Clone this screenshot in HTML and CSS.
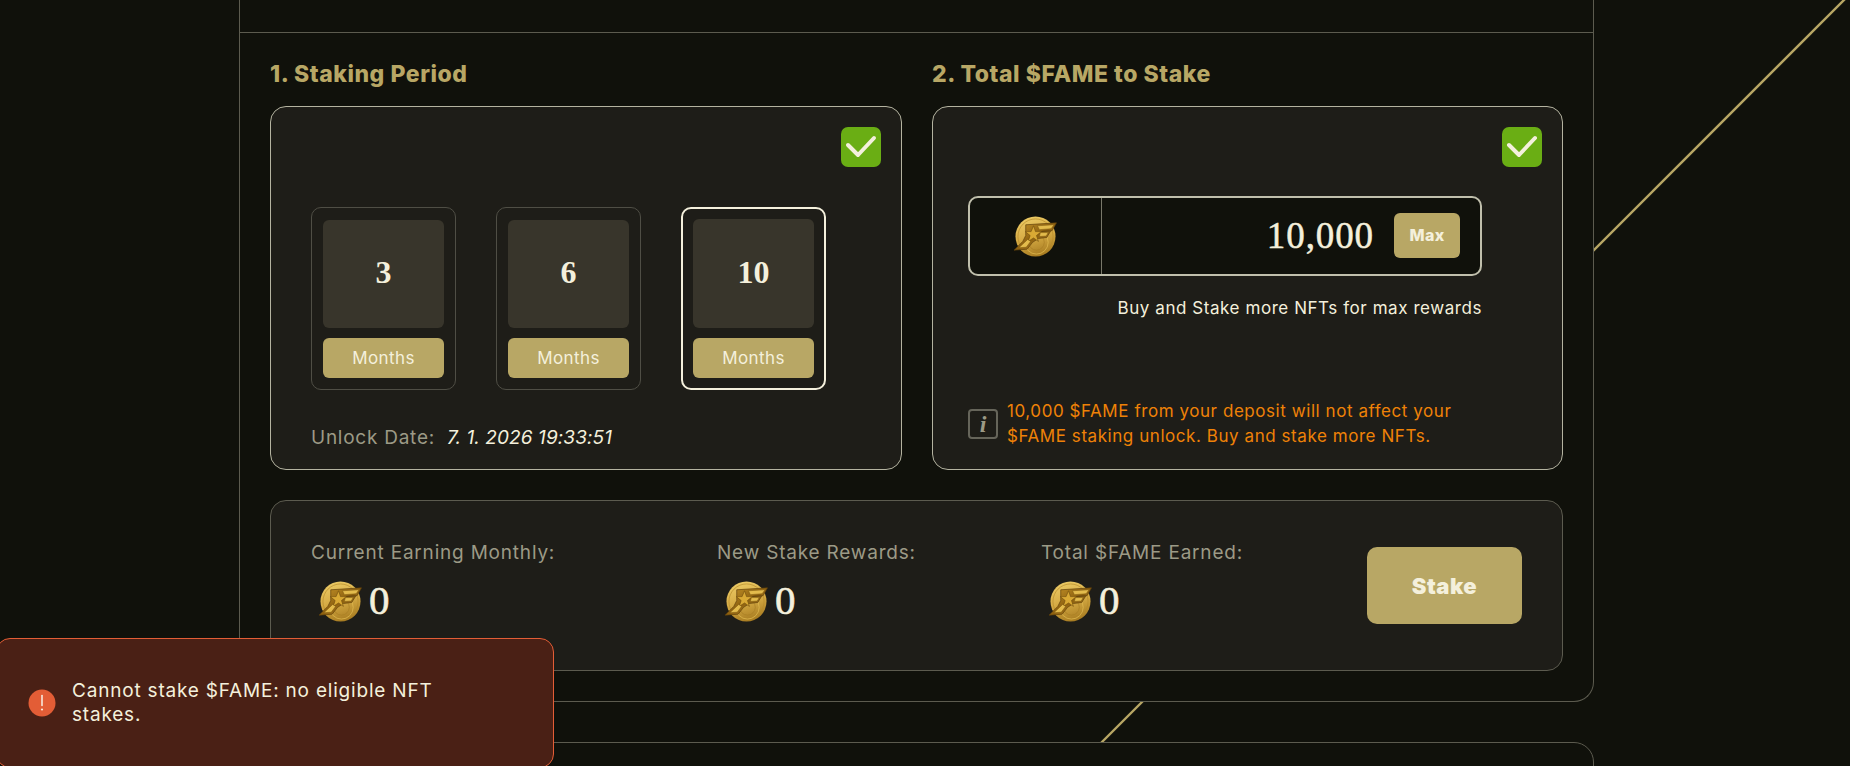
FILE: index.html
```html
<!DOCTYPE html>
<html lang="en">
<head>
<meta charset="utf-8">
<title>Stake $FAME</title>
<link rel="stylesheet" href="styles.css">
</head>
<body>
<svg width="0" height="0" class="defs">
  <defs>
    <linearGradient id="coinFill" x1="0.3" y1="0" x2="0.6" y2="1">
      <stop offset="0" stop-color="#eccb66"/>
      <stop offset="0.5" stop-color="#d6ab44"/>
      <stop offset="1" stop-color="#a67a20"/>
    </linearGradient>
    <linearGradient id="markFill" x1="0" y1="0" x2="1" y2="1">
      <stop offset="0" stop-color="#c9982c"/>
      <stop offset="0.5" stop-color="#8f6210"/>
      <stop offset="1" stop-color="#b9872a"/>
    </linearGradient>
    <symbol id="coin" viewBox="0 0 44 42">
      <circle cx="22" cy="21" r="20.5" fill="url(#coinFill)"/>
      <circle cx="22" cy="21" r="18" fill="none" stroke="#b58a2a" stroke-width=".7"/>
      <circle cx="23" cy="27" r="12" fill="none" stroke="#e3bd52" stroke-width=".7"/>
      <circle cx="23" cy="27" r="8" fill="none" stroke="#a87e24" stroke-width=".7"/>
      <path d="M12 9 43.500 7 39 15 30 15.500 28 16 37.500 15.500 33.500 22 25 23 19 27 13.500 34 0 35 9 26 12 20z" fill="url(#markFill)" stroke="#5f400a" stroke-width=".7" stroke-linejoin="round"/>
      <path d="M20 10 22 16 28 16 23 20 25 26 20 22.500 14.500 26 16.500 20 11.500 16 17.500 16z" fill="#d9a934" stroke="#6d4a0c" stroke-width=".6" stroke-linejoin="round"/>
      <path d="M24 10 41 9 38 13 26 14z" fill="#e3bb4c" stroke="#7a540f" stroke-width=".5"/>
      <path d="M27 17 35 17 33 20.500 26 21z" fill="#e3bb4c" stroke="#7a540f" stroke-width=".5"/>
      <path d="M14 24 5 32.500 12.500 32 17 26z" fill="#e3bb4c" stroke="#7a540f" stroke-width=".5"/>
    </symbol>
    <symbol id="tick" viewBox="0 0 40 40">
      <path d="M7 18l10 10L33 11" fill="none" stroke="#f4f0dc" stroke-width="4" stroke-linecap="round" stroke-linejoin="round"/>
    </symbol>
  </defs>
</svg>

<svg class="diagonal" width="1850" height="766" viewBox="0 0 1850 766">
  <line x1="1849" y1="-5" x2="1089" y2="755"/>
</svg>

<main class="page">
  <section class="panel">
    <div class="panel-head"></div>
    <div class="panel-body">
      <div class="steps">
        <div class="step">
          <h2 class="step-title">1. Staking Period</h2>
          <div class="card card-period">
            <svg class="check"><use href="#tick"/></svg>
            <div class="tiles">
              <div class="tile">
                <div class="tile-num">3</div>
                <div class="tile-unit">Months</div>
              </div>
              <div class="tile">
                <div class="tile-num">6</div>
                <div class="tile-unit">Months</div>
              </div>
              <div class="tile tile-active">
                <div class="tile-num">10</div>
                <div class="tile-unit">Months</div>
              </div>
            </div>
            <p class="unlock"><span class="unlock-label">Unlock Date:</span><em class="unlock-date">7. 1. 2026 19:33:51</em></p>
          </div>
        </div>
        <div class="step">
          <h2 class="step-title">2. Total $FAME to Stake</h2>
          <div class="card card-amount">
            <svg class="check"><use href="#tick"/></svg>
            <div class="amount">
              <div class="amount-coin"><svg class="coin"><use href="#coin"/></svg></div>
              <div class="amount-field">
                <span class="amount-value">10,000</span>
                <button class="max">Max</button>
              </div>
            </div>
            <p class="hint">Buy and Stake more NFTs for max rewards</p>
            <div class="notice">
              <span class="notice-icon">i</span>
              <p class="notice-text">10,000 $FAME from your deposit will not affect your<br>$FAME staking unlock. Buy and stake more NFTs.</p>
            </div>
          </div>
        </div>
      </div>
      <div class="summary">
        <div class="stat">
          <div class="stat-label">Current Earning Monthly:</div>
          <div class="stat-value"><svg class="coin"><use href="#coin"/></svg><span class="stat-num">0</span></div>
        </div>
        <div class="stat">
          <div class="stat-label">New Stake Rewards:</div>
          <div class="stat-value"><svg class="coin"><use href="#coin"/></svg><span class="stat-num">0</span></div>
        </div>
        <div class="stat">
          <div class="stat-label">Total $FAME Earned:</div>
          <div class="stat-value"><svg class="coin"><use href="#coin"/></svg><span class="stat-num">0</span></div>
        </div>
        <button class="stake">Stake</button>
      </div>
    </div>
  </section>
  <section class="panel panel-next"></section>
</main>

<div class="toast">
  <svg class="toast-icon" viewBox="0 0 28 28">
    <circle cx="14" cy="14" r="13.5" fill="#e35d36"/>
    <path d="M14 6.500v10" stroke="#f8e9dc" stroke-width="1.6" stroke-linecap="round"/>
    <circle cx="14" cy="20.500" r="1.100" fill="#f8e9dc"/>
  </svg>
  <p class="toast-text">Cannot stake $FAME: no eligible NFT stakes.</p>
</div>
</body>
</html>
```

FILE: styles.css
```css
* { box-sizing: border-box; }

html, body {
  margin: 0;
  height: 766px;
  overflow: hidden;
  background: #10110b;
  color: #f4f0dc;
  font-family: "Inter", "Noto Sans", sans-serif;
}

p, h2 { margin: 0; }

.defs { position: absolute; }

.diagonal {
  position: absolute;
  left: 0;
  top: 0;
}

.diagonal line {
  stroke: #b8a765;
  stroke-width: 2.4;
}

.page {
  position: relative;
  margin-left: 239px;
  width: 1355px;
}

.panel {
  background: #10110b;
  border: 1px solid #5c5b4f;
  border-top: 0;
  border-radius: 0 0 20px 20px;
}

.panel-head {
  height: 33px;
  border-bottom: 1px solid #5c5b4f;
}

.panel-body {
  padding: 0 30px 30px;
}

.steps {
  display: grid;
  grid-template-columns: 632px 631px;
  gap: 30px;
}

.step-title {
  height: 73px;
  padding-top: 26px;
  font-size: 23px;
  line-height: 30px;
  font-weight: 800;
  letter-spacing: 0.55px;
  color: #b8a765;
}

.card {
  position: relative;
  height: 364px;
  background: #1e1d18;
  border: 1px solid #b4b3a0;
  border-radius: 16px;
}

.check {
  position: absolute;
  top: 20px;
  right: 20px;
  width: 40px;
  height: 40px;
  background: #6aae14;
  border-radius: 7px;
}

.card-period {
  padding: 100px 0 0 40px;
}

.tiles {
  display: flex;
  gap: 40px;
}

.tile {
  display: flex;
  flex-direction: column;
  gap: 10px;
  width: 145px;
  height: 183px;
  padding: 12px 11px 11px;
  border: 1px solid #4f4e45;
  border-radius: 10px;
}

.tile-active {
  padding: 10px;
  border: 2px solid #f4f0dc;
}

.tile-num {
  flex: 1;
  display: flex;
  align-items: center;
  justify-content: center;
  padding-bottom: 3px;
  background: #38352b;
  border-radius: 6px;
  font-family: "Liberation Serif", serif;
  font-size: 32px;
  font-weight: 700;
}

.tile-unit {
  height: 40px;
  display: flex;
  align-items: center;
  justify-content: center;
  background: #b8a765;
  border-radius: 6px;
  font-size: 17px;
  letter-spacing: 0.4px;
}

.unlock {
  display: flex;
  gap: 12px;
  margin-top: 35px;
  font-size: 19px;
  line-height: 25px;
}

.unlock-label {
  color: #9c9a86;
  letter-spacing: 0.75px;
}

.unlock-date {
  font-style: italic;
  letter-spacing: 0.1px;
}

.card-amount {
  display: flex;
  flex-direction: column;
  padding: 89px 0 20px 35px;
}

.amount {
  display: flex;
  width: 514px;
  height: 80px;
  background: #10110b;
  border: 2px solid #c0bfac;
  border-radius: 10px;
}

.amount-coin {
  display: flex;
  align-items: center;
  justify-content: center;
  width: 132px;
  border-right: 1px solid #79786a;
}

.amount-field {
  flex: 1;
  display: flex;
  align-items: center;
  justify-content: flex-end;
  gap: 20px;
  padding: 0 20px 2px 0;
}

.amount-value {
  font-family: "Liberation Serif", serif;
  font-size: 37px;
  letter-spacing: 0.9px;
  -webkit-text-stroke: 0.5px #f4f0dc;
}

.max {
  width: 66px;
  height: 45px;
  border: 0;
  background: #b8a765;
  border-radius: 6px;
  color: #f4f0dc;
  font-family: inherit;
  font-size: 16px;
  font-weight: 800;
  letter-spacing: 0.3px;
}

.hint {
  width: 514px;
  margin-top: 20px;
  text-align: right;
  font-size: 17px;
  letter-spacing: 0.56px;
  line-height: 25px;
}

.notice {
  display: flex;
  align-items: center;
  gap: 9px;
  margin-top: auto;
}

.notice-icon {
  display: flex;
  align-items: center;
  justify-content: center;
  width: 30px;
  height: 30px;
  border: 2px solid #66655a;
  border-radius: 4px;
  color: #9c9a86;
  font-family: "Liberation Serif", serif;
  font-style: italic;
  font-weight: 700;
  font-size: 24px;
}

.notice-text {
  color: #ef8207;
  font-size: 17px;
  letter-spacing: 0.56px;
  line-height: 25px;
}

.summary {
  display: grid;
  grid-template-columns: 406px 324px 326px 155px;
  align-items: center;
  height: 171px;
  margin-top: 30px;
  padding: 0 40px;
  background: #1e1d18;
  border: 1px solid #5c5b4f;
  border-radius: 16px;
}

.stat { margin-top: -9px; }

.stat-label {
  color: #9c9a86;
  font-size: 19px;
  letter-spacing: 0.8px;
  line-height: 25px;
}

.stat-value {
  display: flex;
  align-items: center;
  gap: 7px;
  margin-top: 16px;
  padding-left: 8px;
  font-family: "Liberation Serif", serif;
  font-size: 41px;
  line-height: 40px;
  -webkit-text-stroke: 0.6px #f4f0dc;
}

.stat-num { margin-top: -3px; }

.coin {
  width: 43px;
  height: 41px;
}

.stake {
  width: 155px;
  height: 77px;
  border: 0;
  background: #b8a765;
  border-radius: 10px;
  color: #f4f0dc;
  font-family: inherit;
  font-size: 22px;
  font-weight: 900;
  letter-spacing: 0.5px;
}

.panel-next {
  height: 120px;
  margin-top: 40px;
  border-top: 1px solid #5c5b4f;
  border-radius: 20px 20px 0 0;
}

.toast {
  position: fixed;
  left: -4px;
  top: 638px;
  width: 558px;
  height: 130px;
  display: flex;
  align-items: center;
  gap: 16px;
  padding-left: 31px;
  background: #4a2015;
  border: 1px solid #e35d36;
  border-radius: 14px;
}

.toast-icon {
  flex: none;
  width: 28px;
  height: 28px;
}

.toast-text {
  width: 400px;
  font-size: 19px;
  letter-spacing: 0.8px;
  line-height: 24px;
}
```
